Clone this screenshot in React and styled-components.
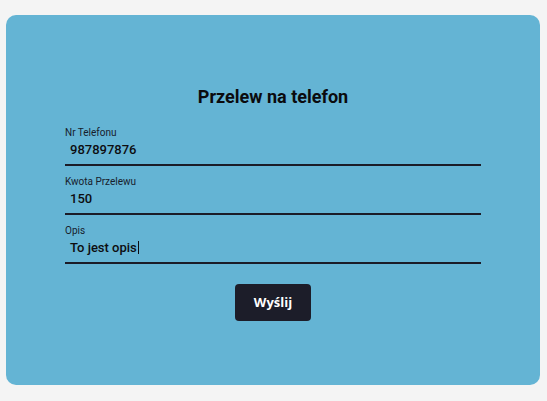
import React from "react";
import styled, { createGlobalStyle } from "styled-components";

const Global = createGlobalStyle`
  html, body { margin: 0; padding: 0; background: #f4f4f4; }
  body { font-family: Roboto, "DejaVu Sans", sans-serif; }
  * { box-sizing: border-box; }
`;

const Page = styled.div`
  width: 547px;
  height: 401px;
  padding: 15px 7px 16px 6px;
  background: #f4f4f4;
`;

const Card = styled.div`
  height: 370px;
  background: #64b4d4;
  border-radius: 10px;
  padding-top: 71px;
  display: flex;
  flex-direction: column;
  align-items: center;
`;

const Title = styled.h2`
  margin: 0;
  font-family: Roboto, sans-serif;
  font-weight: 700;
  font-size: 18px;
  line-height: 22px;
  color: #0b0b0e;
`;

const Form = styled.form`
  width: 416px;
  margin-top: 19px;
  display: flex;
  flex-direction: column;
  gap: 10px;
`;

const Field = styled.div`
  display: flex;
  flex-direction: column;
`;

const Label = styled.label`
  font-family: Roboto, sans-serif;
  font-size: 10px;
  line-height: 12px;
  color: #17202c;
`;

const Value = styled.div`
  height: 27px;
  padding: 0 5px 4px;
  border-bottom: 2px solid #1b1c28;
  font-family: Roboto, sans-serif;
  font-size: 13px;
  font-weight: 500;
  line-height: 21px;
  color: #0d0d10;
  display: flex;
  align-items: flex-start;
`;

const Caret = styled.span`
  display: inline-block;
  width: 1px;
  height: 13px;
  margin-top: 4px;
  margin-left: 1px;
  background: #0d0d10;
`;

const Button = styled.button`
  align-self: center;
  margin-top: 10px;
  width: 76px;
  height: 37px;
  padding: 0 0 2px;
  border: none;
  border-radius: 4px;
  background: #1c1d29;
  color: #ffffff;
  font-family: "Open Sans", sans-serif;
  font-weight: 700;
  font-size: 13px;
  display: flex;
  align-items: center;
  justify-content: center;
  cursor: pointer;
`;

const fields = [
  { label: "Nr Telefonu", value: "987897876" },
  { label: "Kwota Przelewu", value: "150" },
  { label: "Opis", value: "To jest opis", caret: true },
];

export default function App() {
  return (
    <>
      <Global />
      <Page>
        <Card>
          <Title>Przelew na telefon</Title>
          <Form onSubmit={(e) => e.preventDefault()}>
            {fields.map((f) => (
              <Field key={f.label}>
                <Label>{f.label}</Label>
                <Value>
                  {f.value}
                  {f.caret && <Caret />}
                </Value>
              </Field>
            ))}
            <Button type="submit">Wyślij</Button>
          </Form>
        </Card>
      </Page>
    </>
  );
}
